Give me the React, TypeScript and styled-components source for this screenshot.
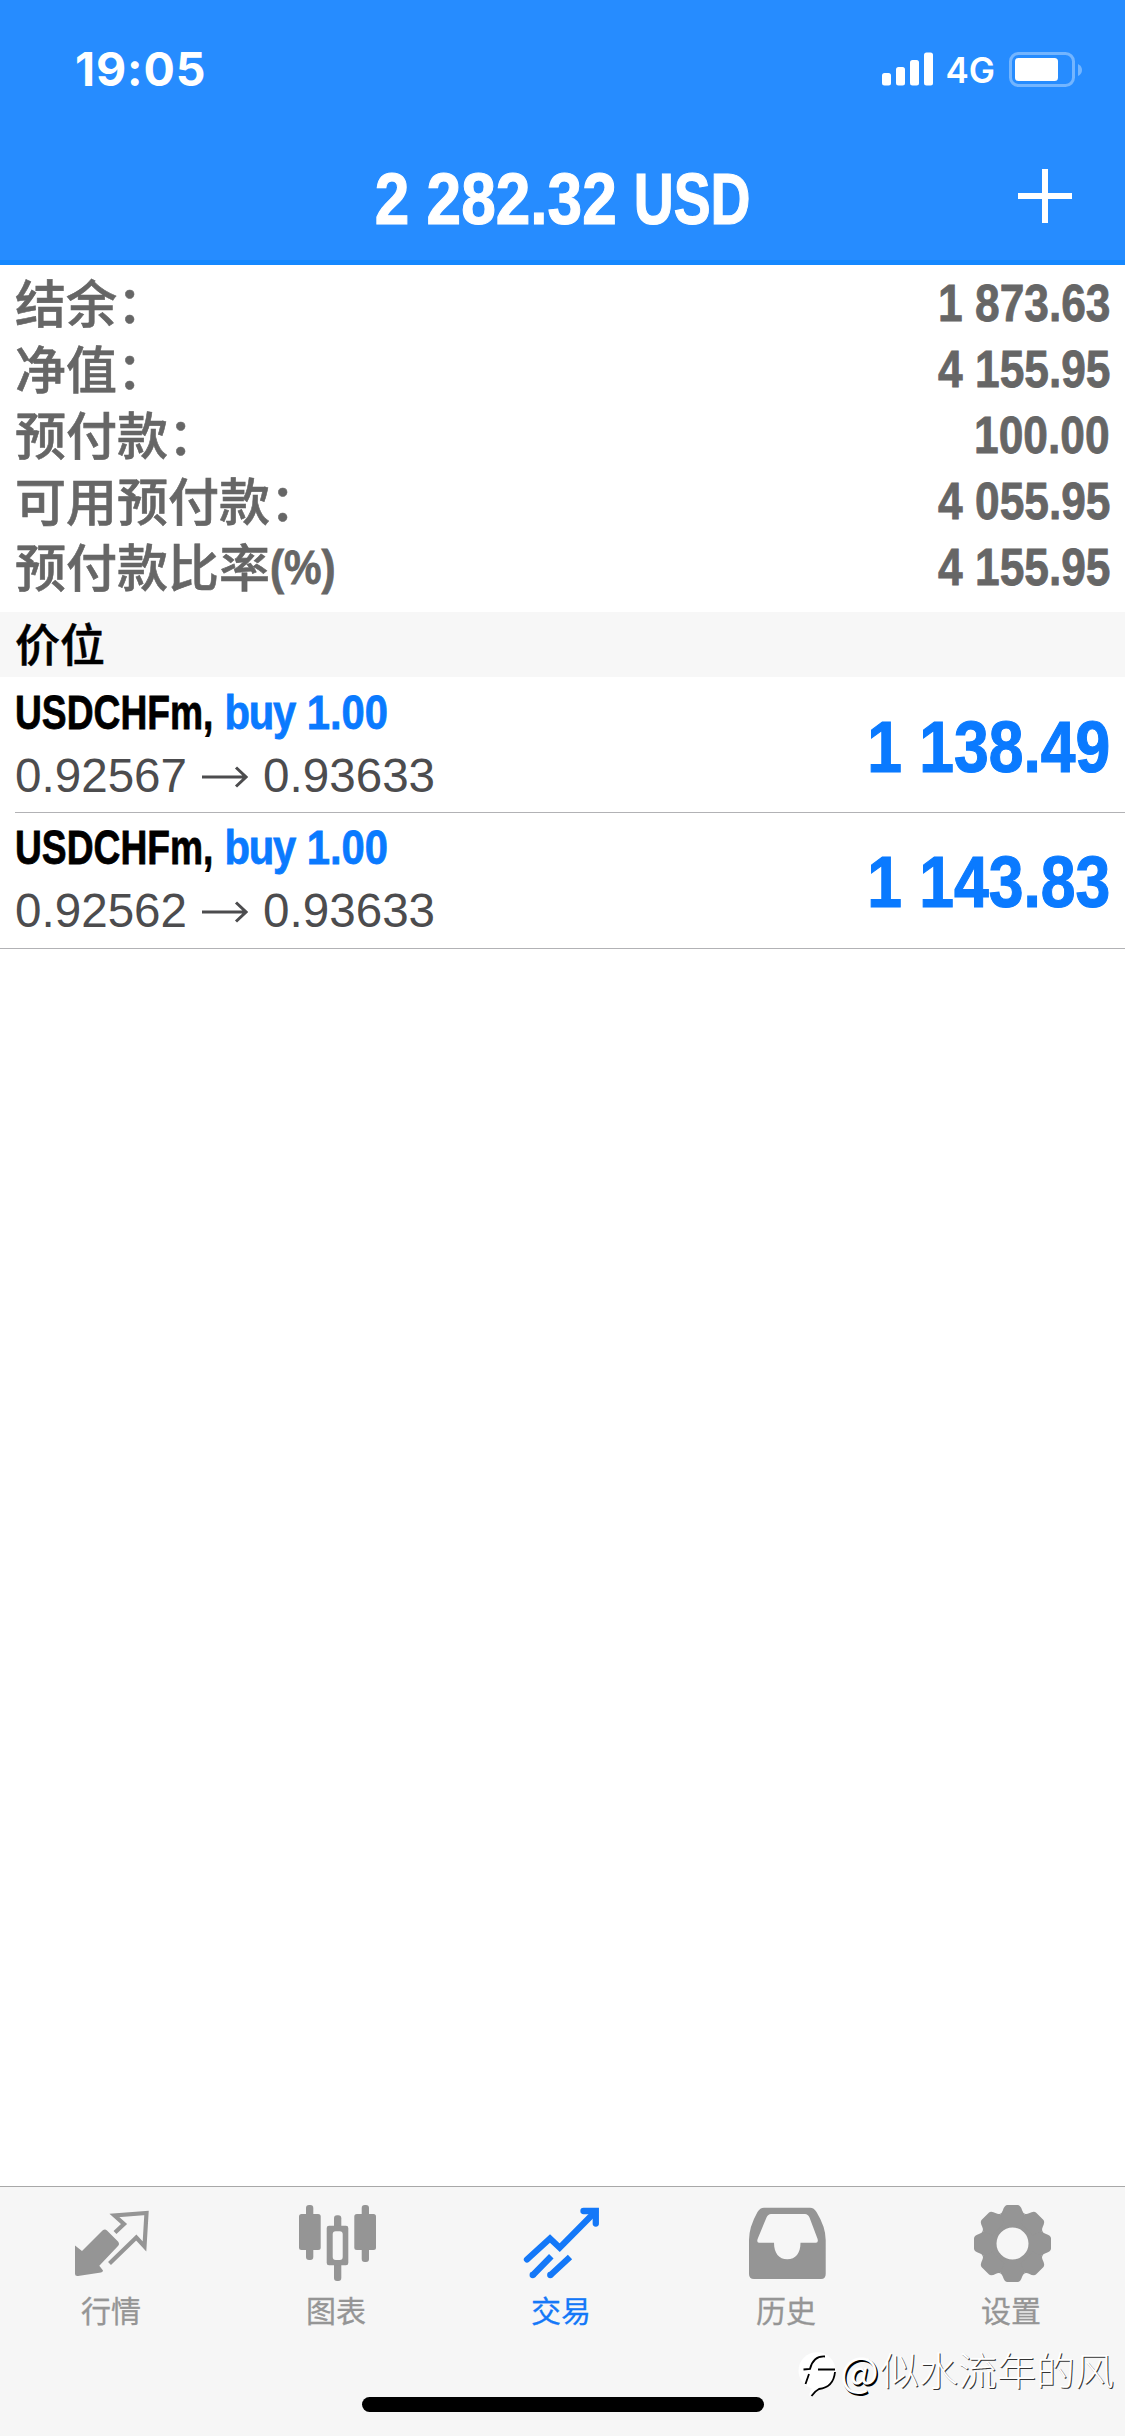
import React from "react";
import styled, { createGlobalStyle } from "styled-components";

const latin = '"Liberation Sans", Arial, "Noto Sans CJK SC", sans-serif';
const cjk = '"Noto Sans CJK SC", sans-serif';

const GlobalStyle = createGlobalStyle`
  * { box-sizing: border-box; }
  body { margin: 0; background: #fff; }
`;

const Screen = styled.div`
  position: relative;
  width: 1125px;
  height: 2436px;
  display: flex;
  flex-direction: column;
  background: #fff;
  overflow: hidden;
  font-family: ${latin};
  white-space: nowrap;
`;

const Header = styled.header`
  height: 265px;
  background: #268cff;
  border-bottom: 5px solid #1588ff;
`;

const StatusBar = styled.div`
  height: 132px;
  padding: 0 43px 0 75px;
  display: flex;
  align-items: center;
  justify-content: space-between;
  color: #fff;
  font-family: Inter, sans-serif;
`;

const Clock = styled.div`
  padding-top: 6px;
  font-size: 46.5px;
  font-weight: 700;
  letter-spacing: 0.9px;
`;

const StatusIcons = styled.div`
  display: flex;
  align-items: center;
  padding-top: 6px;
`;

const Network = styled.span`
  margin: 2px 14px 0 12px;
  font-size: 35px;
  line-height: 36px;
  font-weight: 600;
`;

const TitleBar = styled.div`
  height: 128px;
  padding: 0 53px;
  display: grid;
  grid-template-columns: 54px 1fr 54px;
  align-items: center;
`;

const Condensed = styled.span<{ $size: number; $scale: number; $origin: string }>`
  display: inline-block;
  font-family: ${latin};
  font-size: ${(p) => p.$size}px;
  line-height: 1;
  font-weight: 700;
  -webkit-text-stroke: 0.016em currentColor;
  transform: scaleX(${(p) => p.$scale});
  transform-origin: ${(p) => p.$origin} center;
`;

const Tight = styled.span<{ $trim: number }>`
  display: inline-block;
  transform: scaleX(0.89);
  transform-origin: left center;
  margin-right: ${(p) => -p.$trim}em;
`;

const Title = styled.h1`
  margin: 5px 0 0;
  grid-column: 2;
  justify-self: center;
  color: #fff;
  line-height: 1;
  display: flex;
`;

const Summary = styled.section`
  height: 347px;
  padding: 6px 15px 0;
`;

const SummaryRow = styled.div`
  height: 66px;
  display: flex;
  justify-content: space-between;
  align-items: center;
  color: #666;
`;

const Label = styled.span`
  margin-top: -7px;
  display: flex;
  align-items: center;
  font-family: ${cjk};
  font-size: 51px;
  line-height: 66px;
  font-weight: 500;
  -webkit-text-stroke: 0.6px currentColor;
`;

const Unit = styled.span`
  display: flex;
  margin-top: 5px;
`;

const SectionHead = styled.div`
  height: 65px;
  padding: 0 15px;
  background: #f7f7f7;
  font-family: ${cjk};
  font-size: 45px;
  line-height: 62px;
  font-weight: 500;
  -webkit-text-stroke: 0.5px currentColor;
  color: #000;
`;

const Position = styled.div<{ $last?: boolean }>`
  height: 136px;
  margin-left: ${(p) => (p.$last ? 0 : 15)}px;
  padding: ${(p) => (p.$last ? 10 : 11)}px 15px 0 ${(p) => (p.$last ? 15 : 0)}px;
  border-bottom: 1px solid #b2b2b5;
  display: flex;
  justify-content: space-between;
`;

const Deal = styled.div`
  display: flex;
  flex-direction: column;
  align-items: flex-start;
`;

const Side = styled.span`
  color: #0a7aff;
`;

const Word = styled.span`
  letter-spacing: -0.03em;
`;

const Prices = styled.div`
  margin-top: 15px;
  display: flex;
  align-items: center;
  font-size: 47.6px;
  line-height: 48px;
  color: #4c4c4e;
`;

const ArrowIcon = styled.svg`
  margin: 2px 15px 0 15px;
`;

const Profit = styled.div`
  padding-top: 22px;
  color: #0a7aff;
`;

const Spacer = styled.div`
  flex: 1;
`;

const TabBar = styled.nav`
  height: 250px;
  border-top: 1px solid #a8a8a8;
  background: #f6f6f6;
  display: grid;
  grid-template-columns: repeat(5, 225px);
`;

const Tab = styled.div<{ $active?: boolean }>`
  display: flex;
  flex-direction: column;
  align-items: center;
  padding-top: 16px;
  color: ${(p) => (p.$active ? "#1478f8" : "#959595")};
`;

const TabLabel = styled.span`
  margin: 6px 0 0 -3px;
  font-family: ${cjk};
  font-size: 30px;
  line-height: 40px;
  -webkit-text-stroke: 0.3px currentColor;
`;

const HomeIndicator = styled.div`
  position: absolute;
  left: 362px;
  bottom: 24px;
  width: 402px;
  height: 15px;
  border-radius: 8px;
  background: #000;
`;

const Watermark = styled.div`
  position: absolute;
  left: 797px;
  top: 2345px;
  display: flex;
  align-items: center;
  color: #fff;
  font-family: ${cjk};
  font-size: 39px;
  line-height: 50px;
  font-weight: 300;
  text-shadow: 1px 1px 0 #333;
`;

const At = styled.span`
  width: 40px;
  margin-top: -6px;
  font-size: 41px;
  font-weight: 400;
  text-shadow: 1px 1px 0 #000, 1.5px 1.5px 0 #000;
`;

const Name = styled.span`
  margin-top: -8px;
`;

const TabIcon = ({ children }: { children: React.ReactNode }) => (
  <svg width="81" height="80" viewBox="0 0 81 80" fill="currentColor">
    {children}
  </svg>
);

const QuotesIcon = () => (
  <TabIcon>
    <path d="M3 42.500 10 48 30.500 27.500Q33 25.500 35 27.500L46 38.500Q48 41 46 43L27.300 62.700 31 67.500Q31 69 29 69.500L6 73Q3 73.300 3 71Z" />
    <path d="M43 29.500 52 21 42.500 12.500 74.500 10 72.500 43.500 64.300 34.500 37.500 60.500" fill="none" stroke="currentColor" strokeWidth="4.200" />
  </TabIcon>
);

const ChartIcon = () => (
  <TabIcon>
    <rect x="9" y="2" width="7.300" height="55" rx="3" />
    <rect x="2" y="11" width="21.700" height="36" rx="2.500" />
    <rect x="64.700" y="2" width="7.300" height="57" rx="3" />
    <rect x="57.300" y="11" width="21.700" height="36" rx="2.500" />
    <rect x="37" y="12.300" width="7.300" height="14" rx="3" />
    <rect x="37" y="59" width="7.300" height="19" rx="3" />
    <path fillRule="evenodd" d="M32 22.700H49A2.300 2.300 0 0 1 51.300 25V60A2.300 2.300 0 0 1 49 62.300H32A2.300 2.300 0 0 1 29.700 60V25A2.300 2.300 0 0 1 32 22.700ZM38.700 28.300A3 3 0 0 0 35.700 31.300V54A3 3 0 0 0 38.700 57H42.700A3 3 0 0 0 45.700 54V31.300A3 3 0 0 0 42.700 28.300Z" />
  </TabIcon>
);

const TradeIcon = () => (
  <TabIcon>
    <g fill="none" stroke="currentColor" strokeWidth="6.300" strokeLinecap="round">
      <path d="M5 56.500 28 35.500 37.700 44.700 73 9" />
      <path d="M61.500 8H73.800V20.500" />
    </g>
    <path d="M10.700 72.300 29.300 53.300M28.300 72.300 48 54" fill="none" stroke="currentColor" strokeWidth="6.300" />
    <circle cx="10.700" cy="72" r="3.150" />
    <circle cx="28.300" cy="72" r="3.150" />
  </TabIcon>
);

const HistoryIcon = () => (
  <TabIcon>
    <path
      fillRule="evenodd"
      d="M17 4.700H63Q67 4.700 69.500 9 78.700 24 78.700 37V71Q78.700 76 74 76H7Q2 76 2 71V37Q2 24 10.500 9 13 4.700 17 4.700ZM24 11Q21 11 19.500 14.500L10.600 36Q9.500 39.700 12 39.700H27C27 50 32 56.300 40.300 56.300S53.500 50 53.500 39.700H69Q71.500 39.700 70.600 36L62.500 14.500Q61 11 58 11Z"
    />
  </TabIcon>
);

const SettingsIcon = () => (
  <TabIcon>
    <g transform="translate(40.500 40.500)">
      <circle r="23.500" fill="none" stroke="currentColor" strokeWidth="15" />
      {[0, 45, 90, 135, 180, 225, 270, 315].map((angle) => (
        <path
          key={angle}
          transform={`rotate(${angle})`}
          d="M-12.400-29.800Q-10.500-30.500-9.700-33 -8-38.500-5-38.500H5Q8-38.500 9.700-33 10.500-30.500 12.400-29.800L8-20H-8Z"
        />
      ))}
    </g>
  </TabIcon>
);

const summary = [
  { label: "结余：", value: "1 873.63" },
  { label: "净值：", value: "4 155.95" },
  { label: "预付款：", value: "100.00" },
  { label: "可用预付款：", value: "4 055.95" },
  { label: "预付款比率", unit: "(%)", value: "4 155.95" },
];

const positions = [
  { open: "0.92567", current: "0.93633", profit: "1 138.49" },
  { open: "0.92562", current: "0.93633", profit: "1 143.83" },
];

const tabs = [
  { label: "行情", Icon: QuotesIcon },
  { label: "图表", Icon: ChartIcon },
  { label: "交易", Icon: TradeIcon, active: true },
  { label: "历史", Icon: HistoryIcon },
  { label: "设置", Icon: SettingsIcon },
];

export default function App() {
  return (
    <Screen>
      <GlobalStyle />
      <Header>
        <StatusBar>
          <Clock>19:05</Clock>
          <StatusIcons>
            <svg width="51" height="34" viewBox="0 0 51 34" fill="#fff">
              <rect x="0" y="21" width="9" height="12.500" rx="2.500" />
              <rect x="14" y="15" width="9" height="18.500" rx="2.500" />
              <rect x="28" y="8" width="9" height="25.500" rx="2.500" />
              <rect x="42" y="0.500" width="9" height="33" rx="2.500" />
            </svg>
            <Network>4G</Network>
            <svg width="73" height="35" viewBox="0 0 73 35">
              <rect x="1.500" y="1.500" width="63" height="32" rx="8" fill="none" stroke="#73b5ff" strokeWidth="3" />
              <rect x="6" y="6" width="43" height="23" rx="3.500" fill="#fff" />
              <path d="M69 12Q73 14 73 18T69 24Z" fill="#73b5ff" />
            </svg>
          </StatusIcons>
        </StatusBar>
        <TitleBar>
          <Title>
            <Condensed $size={73} $scale={0.852} $origin="center">
              2 282.32 <Tight $trim={0.23}>USD</Tight>
            </Condensed>
          </Title>
          <svg width="54" height="54" viewBox="0 0 54 54" stroke="#fff" strokeWidth="6">
            <path d="M0 27H54M27 0V54" />
          </svg>
        </TitleBar>
      </Header>
      <Summary>
        {summary.map(({ label, unit, value }) => (
          <SummaryRow key={label}>
            <Label>
              {label}
              {unit && (
                <Unit>
                  <Condensed $size={49} $scale={0.86} $origin="left">{unit}</Condensed>
                </Unit>
              )}
            </Label>
            <Condensed $size={51.5} $scale={0.86} $origin="right">{value}</Condensed>
          </SummaryRow>
        ))}
      </Summary>
      <SectionHead>价位</SectionHead>
      {positions.map((p, i) => (
        <Position key={p.open} $last={i === 1}>
          <Deal>
            <Condensed $size={49} $scale={0.853} $origin="left">
              <Tight $trim={0.6}>USDCHFm,</Tight>{" "}
              <Side><Word>buy</Word> 1.00</Side>
            </Condensed>
            <Prices>
              {p.open}
              <ArrowIcon width="46" height="22" viewBox="0 0 46 22" fill="none" stroke="#4c4c4e" strokeWidth="3">
                <path d="M0 11H44M34 1.500 44 11 34 20.500" />
              </ArrowIcon>
              {p.current}
            </Prices>
          </Deal>
          <Profit>
            <Condensed $size={73} $scale={0.855} $origin="right">{p.profit}</Condensed>
          </Profit>
        </Position>
      ))}
      <Spacer />
      <TabBar>
        {tabs.map(({ label, Icon, active }) => (
          <Tab key={label} $active={active}>
            <Icon />
            <TabLabel>{label}</TabLabel>
          </Tab>
        ))}
      </TabBar>
      <HomeIndicator />
      <Watermark>
        <svg width="43" height="54" viewBox="0 0 43 54">
          <circle cx="20" cy="25.700" r="18.500" fill="#fff" />
          <path d="M12 51C13 46 15 42 18 40L26 43Z" fill="#fff" />
          <path
            d="M6.500 24.500 13 24C15 16 20 11 28 11.500M21 24.500H38M38 27C37 37 31 43 22 44Q18 46 14.500 51M12 29 8.500 39"
            fill="none"
            stroke="#000"
            strokeWidth="1.800"
          />
        </svg>
        <At>@</At>
        <Name>似水流年的风</Name>
      </Watermark>
    </Screen>
  );
}
